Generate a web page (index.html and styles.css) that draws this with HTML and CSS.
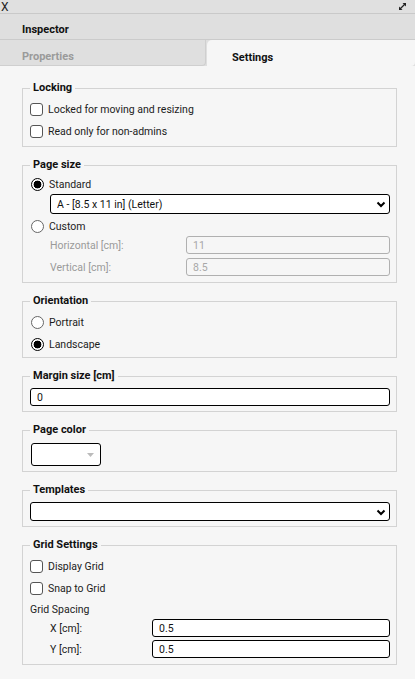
FILE: index.html
```html
<!DOCTYPE html>
<html lang="en">
<head>
  <meta charset="UTF-8">
  <title>Inspector</title>
  <link rel="stylesheet" href="styles.css">
</head>
<body>

  <div class="titlebar">
    <span class="close">X</span>
    <svg class="expand" width="9" height="9" viewBox="0 0 9 9">
      <path d="M1.5 7.5 L7.5 1.5" stroke="#222" stroke-width="1.3"/>
      <path d="M4.5 1 H8 V4.5 Z" fill="#222"/>
      <path d="M1 4.5 V8 H4.5 Z" fill="#222"/>
    </svg>
  </div>

  <div class="heading">Inspector</div>

  <div class="tabs">
    <div class="tab">Properties</div>
    <div class="tab active">Settings</div>
  </div>

  <div class="content">

    <fieldset class="locking">
      <legend>Locking</legend>
      <label class="row"><input type="checkbox"> Locked for moving and resizing</label>
      <label class="row"><input type="checkbox"> Read only for non-admins</label>
    </fieldset>

    <fieldset class="pagesize">
      <legend>Page size</legend>
      <label class="row short"><input type="radio" name="size" checked> Standard</label>
      <div class="select indent">
        <select>
          <option>A - [8.5 x 11 in] (Letter)</option>
        </select>
        <svg class="chev" width="10" height="7" viewBox="0 0 10 7"><path d="M1.5 1.5 L5 5 L8.5 1.5" fill="none" stroke="#000" stroke-width="2"/></svg>
      </div>
      <label class="row custom"><input type="radio" name="size"> Custom</label>
      <div class="field disabled">
        <span class="lbl">Horizontal [cm]:</span>
        <input type="text" value="11" disabled>
      </div>
      <div class="field disabled">
        <span class="lbl">Vertical [cm]:</span>
        <input type="text" value="8.5" disabled>
      </div>
    </fieldset>

    <fieldset>
      <legend>Orientation</legend>
      <label class="row"><input type="radio" name="orient"> Portrait</label>
      <label class="row"><input type="radio" name="orient" checked> Landscape</label>
    </fieldset>

    <fieldset>
      <legend>Margin size [cm]</legend>
      <input class="text full" type="text" value="0">
    </fieldset>

    <fieldset>
      <legend>Page color</legend>
      <div class="color">
        <svg width="7" height="4" viewBox="0 0 7 4"><path d="M0 0 H7 L3.5 4 Z" fill="#bbb"/></svg>
      </div>
    </fieldset>

    <fieldset>
      <legend>Templates</legend>
      <div class="select tpl">
        <select><option></option></select>
        <svg class="chev" width="10" height="7" viewBox="0 0 10 7"><path d="M1.5 1.5 L5 5 L8.5 1.5" fill="none" stroke="#000" stroke-width="2"/></svg>
      </div>
    </fieldset>

    <fieldset class="grid">
      <legend>Grid Settings</legend>
      <label class="row"><input type="checkbox"> Display Grid</label>
      <label class="row"><input type="checkbox"> Snap to Grid</label>
      <div class="spacing">Grid Spacing</div>
      <div class="field">
        <span class="lbl">X [cm]:</span>
        <input type="text" value="0.5">
      </div>
      <div class="field">
        <span class="lbl">Y [cm]:</span>
        <input type="text" value="0.5">
      </div>
    </fieldset>

  </div>

</body>
</html>
```

FILE: styles.css
```css
* {
  margin: 0;
  padding: 0;
  box-sizing: border-box;
  font-family: Roboto, 'Liberation Sans', sans-serif;
}

body {
  width: 415px;
  height: 679px;
  background: #f6f6f6;
  color: #1c1c1c;
  font-size: 10.5px;
  overflow: hidden;
}

.titlebar {
  height: 14px;
  background: #e0e0e0;
  border-bottom: 1px solid #c9c9c9;
  display: flex;
  align-items: center;
  justify-content: space-between;
  padding: 0 8px 0 1px;
}

.close {
  font-size: 12px;
  line-height: 12px;
  color: #222;
}

.heading {
  height: 26px;
  background: #dfdfdf;
  border-bottom: 1px solid #cbcbcb;
  padding: 9px 0 0 22px;
  line-height: 14px;
  font-size: 11px;
  font-weight: bold;
  color: #111;
}

.tabs {
  display: flex;
  height: 26px;
  background: #dfdfdf;
}

.tab {
  flex: 1;
  padding: 10px 0 0 22px;
  line-height: 14px;
  font-size: 11px;
  font-weight: bold;
  color: #9a9a9a;
  border-bottom: 1px solid #cfcfcf;
  border-right: 1px solid #cfcfcf;
  border-bottom-right-radius: 4px;
}

.tab.active {
  flex: 0 0 208px;
  background: #f6f6f6;
  color: #111;
  border: none;
  border-top-left-radius: 5px;
  margin-left: 1px;
  padding: 11px 0 0 25px;
}

.content {
  padding: 15px 18px 0 22px;
}

fieldset {
  border: 1px solid #d3d3d3;
  padding: 3px 6px 2px 7px;
  margin-bottom: 11px;
}

legend {
  font-size: 11px;
  font-weight: bold;
  color: #111;
  padding: 0 3px;
  line-height: 14px;
}

.locking {
  padding-bottom: 4px;
}

.row {
  height: 22px;
  display: flex;
  align-items: center;
  gap: 5px;
}

.row.short {
  height: 19px;
}

.row.custom {
  height: 20px;
  margin-top: 2px;
}

input[type="checkbox"] {
  appearance: none;
  width: 13px;
  height: 13px;
  border: 1px solid #555;
  border-radius: 3px;
  background: #fff;
}

input[type="radio"] {
  appearance: none;
  width: 13px;
  height: 13px;
  margin-left: 1px;
  border: 1px solid #666;
  border-radius: 50%;
  background: #fff;
}

input[type="radio"]:checked {
  border: 1.5px solid #000;
  background: radial-gradient(circle, #000 0 3.6px, #fff 4.2px);
}

.select {
  position: relative;
  height: 20px;
}

.select.indent {
  margin-left: 20px;
}

.select select {
  appearance: none;
  width: 100%;
  height: 100%;
  border: 1px solid #000;
  border-radius: 3px;
  background: #fff;
  font-size: 10.5px;
  color: #111;
  padding-left: 6px;
}

.select .chev {
  position: absolute;
  right: 4px;
  top: 7px;
}

.select.tpl {
  margin: 2px 0 3px;
  height: 19px;
}

.field {
  display: flex;
  align-items: center;
  padding-left: 20px;
  margin-bottom: 4px;
}

.field .lbl {
  flex: 0 0 136px;
}

.field input {
  flex: 1;
  min-width: 0;
  height: 18px;
  border: 1px solid #000;
  border-radius: 3px;
  background: #fff;
  font-size: 10.5px;
  padding-left: 6px;
  color: #111;
}

.field.disabled .lbl {
  color: #9a9a9a;
}

.field.disabled input {
  border-color: #b0b0b0;
  background: #f6f6f6;
  color: #a8a8a8;
}

.pagesize {
  padding-bottom: 2px;
}

.grid .field .lbl {
  flex-basis: 102px;
}

.grid .field {
  margin-bottom: 3px;
}

.grid {
  padding-bottom: 3px;
}

.spacing {
  height: 20px;
  display: flex;
  align-items: center;
}

.text.full {
  display: block;
  width: 100%;
  height: 18px;
  margin: 2px 0 3px;
  border: 1px solid #000;
  border-radius: 3px;
  background: #fff;
  font-size: 10.5px;
  padding-left: 6px;
  color: #111;
}

.color {
  width: 70px;
  height: 23px;
  margin: 3px 0 3px 1px;
  border: 1px solid #000;
  border-radius: 3px;
  background: #fff;
  display: flex;
  align-items: center;
  justify-content: flex-end;
  padding-right: 6px;
}
```
